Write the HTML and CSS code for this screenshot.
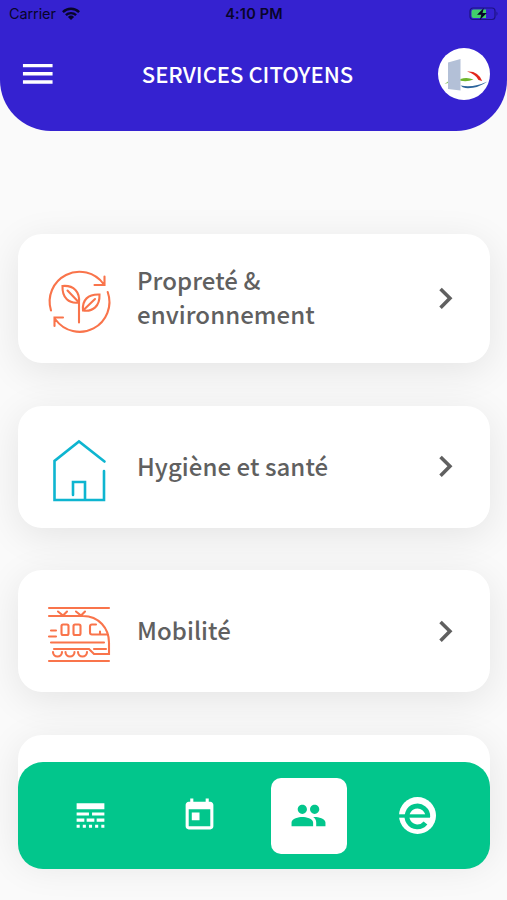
FILE: index.html
```html
<!DOCTYPE html>
<html lang="fr">
<head>
<meta charset="utf-8">
<title>Services citoyens</title>
<link rel="stylesheet" href="styles.css">
</head>
<body>
<div class="screen">
  <header class="header">
    <div class="status">
      <div class="carrier"><span>Carrier</span>
        <svg class="wifi" viewBox="0 0 18 13"><g fill="none" stroke="#08052a" stroke-width="2.4"><path d="M.9 5.1a11.5 11.5 0 0 1 16.2 0"/><path d="M3.9 8.2a7.2 7.2 0 0 1 10.2 0"/></g><path d="M9 13 5.9 9.9a4.4 4.4 0 0 1 6.2 0z" fill="#08052a"/></svg>
      </div>
      <div class="time">4:10 PM</div>
      <svg class="battery" viewBox="0 0 30 14"><rect x="1" y="1" width="25" height="11.5" rx="3" fill="none" stroke="#1d1382" stroke-width="1.2"/><path d="M4.5 2.5H17v8.6H4.500a2 2 0 0 1-2-2V4.500a2 2 0 0 1 2-2z" fill="#41d16b"/><path d="M27.500 4.600q2 2.200 0 4.400z" fill="#1d1382"/><path d="M14.800 1 8 7.700h4.300L10.800 13 17.800 6h-4.300z" fill="#08052a"/></svg>
    </div>
    <div class="titlebar">
      <svg class="menu" viewBox="0 0 24 24"><path d="M3 18h18v-2H3v2zm0-5h18v-2H3v2zm0-7v2h18V6H3z" fill="#fff"/></svg>
      <h1>SERVICES CITOYENS</h1>
      <svg class="avatar" viewBox="0 0 52 52"><circle cx="26" cy="26" r="26" fill="#fff"/><path d="M10 14.500 22.500 11v31.500L10 41z" fill="#b3c0d7"/><path d="M6.500 36 10 33.500v1.600z" fill="#8cc36a"/><path d="M22.500 31q6.500-2.200 13 .6-6 2.500-13 1.200z" fill="#6fb52c"/><path d="M29 23.500q11-1 15.200 9.500l-3.700-1q-3-6-11.500-8.500z" fill="#e2261c"/><path d="M22.500 37.500q13 2.500 27-4-10.500 7.500-22 6.600-3-.6-5-2.600z" fill="#2d649b"/></svg>
    </div>
  </header>

  <main class="list">
    <a class="card tall">
      <svg class="icon orange" viewBox="0 0 64 64"><path d="M4 44.500A29.800 29.800 0 0 1 56.500 18M57.500 10.500V19H47.500M60.700 26A29.800 29.800 0 0 1 8.500 53.500M7.500 60V51.500H16M32 56.500V35M32 36.500C22 38 15 32 15.500 20 27 19 33 26 32 36.500zM20.500 24.500 32 36.500M36 44.500C35 34 41 28 52.500 28.500 53 40 46 46 36 44.500zM36 44.500 48 33"/></svg>
      <span class="label">Propreté &amp;<br>environnement</span>
      <svg class="chevron" viewBox="0 0 24 24"><path d="M10 6 8.590 7.410 13.170 12l-4.580 4.590L10 18l6-6z"/></svg>
    </a>
    <a class="card">
      <svg class="icon cyan" viewBox="0 0 64 64"><path d="M57.500 26.500 32 6.500 7.500 26V65H57V36M26 60V47H38V64.500"/></svg>
      <span class="label">Hygiène et santé</span>
      <svg class="chevron" viewBox="0 0 24 24"><path d="M10 6 8.590 7.410 13.170 12l-4.580 4.590L10 18l6-6z"/></svg>
    </a>
    <a class="card">
      <svg class="icon orange" viewBox="0 -4.500 64 64"><path d="M2 4.500H62M2 12.500H36C52 12.500 62 25 62 39V50.500H47L42 45.500H7M11 8l5 4 4-4M29 8l5 4 4-4M49 21H45q-2 0-2 2v6q0 2 2 2H61M53 28v3M4 39H57M4 27h5M2 33h7M47 45.500H59M2 57.500H62"/><rect x="14.500" y="21" width="7" height="10.500" rx="1.500"/><rect x="26.500" y="21" width="7" height="10.500" rx="1.500"/><path d="M6 48.500a4.500 4.500 0 0 0 9 0M18.500 48.500a4.500 4.500 0 0 0 9 0M31 48.500a4.500 4.500 0 0 0 9 0"/></svg>
      <span class="label">Mobilité</span>
      <svg class="chevron" viewBox="0 0 24 24"><path d="M10 6 8.590 7.410 13.170 12l-4.580 4.590L10 18l6-6z"/></svg>
    </a>
    <a class="card"></a>
  </main>

  <nav class="tabs">
    <a class="tab"><svg viewBox="0 0 24 24"><path d="M3 16h5v-2H3v2zm6.500 0h5v-2h-5v2zm6.500 0h5v-2h-5v2zM3 20h2v-2H3v2zm4 0h2v-2H7v2zm4 0h2v-2h-2v2zm4 0h2v-2h-2v2zm4 0h2v-2h-2v2zM3 12h8v-2H3v2zm10 0h8v-2h-8v2zM3 4v4h18V4H3z"/></svg></a>
    <a class="tab"><svg viewBox="0 0 24 24"><path d="M19 3h-1V1h-2v2H8V1H6v2H5c-1.110 0-1.990.9-1.990 2L3 19c0 1.100.890 2 2 2h14c1.100 0 2-.9 2-2V5c0-1.100-.9-2-2-2zm0 16H5V8h14v11zM7 10h5v5H7z"/></svg></a>
    <a class="tab active"><svg viewBox="0 0 24 24"><path d="M16 11c1.660 0 2.990-1.340 2.990-3S17.660 5 16 5s-3 1.340-3 3 1.340 3 3 3zm-8 0c1.660 0 2.990-1.340 2.990-3S9.660 5 8 5 5 6.340 5 8s1.340 3 3 3zm0 2c-2.330 0-7 1.170-7 3.500V19h14v-2.500c0-2.330-4.670-3.500-7-3.500zm8 0c-.290 0-.620.020-.970.050 1.160.840 1.970 1.970 1.970 3.450V19h6v-2.500c0-2.330-4.670-3.500-7-3.500z"/></svg></a>
    <a class="tab"><svg viewBox="0 0 37 37"><circle cx="18.500" cy="18.500" r="18.500"/><g fill="none" stroke="#02c68c"><path d="M28.800 20A10.400 10.400 0 1 0 26.500 26" stroke-width="4.800"/><path d="M0 19H31" stroke-width="3.400"/></g></svg></a>
  </nav>
</div>
</body>
</html>
```
FILE: styles.css
```css
* { box-sizing: border-box; }
body { margin: 0; }
svg { display: block; flex: none; }

.screen {
  position: relative;
  width: 507px;
  height: 900px;
  overflow: hidden;
  background: #fafafa;
  font-family: "Noto Sans CJK SC", sans-serif;
}

.header {
  height: 131px;
  background: #3522d0;
  border-radius: 0 0 51px 51px;
}
.status {
  display: grid;
  grid-template-columns: 1fr auto 1fr;
  align-items: center;
  height: 27px;
  padding: 0 8px 0 9px;
  font: 14.5px/27px Inter, sans-serif;
  color: #08052a;
}
.carrier { display: flex; align-items: center; gap: 6px; }
.carrier span { letter-spacing: -.1px; }
.wifi { width: 18px; height: 13px; }
.time { font-weight: 600; letter-spacing: .15px; }
.battery { width: 30px; height: 14px; justify-self: end; }

.titlebar {
  display: grid;
  grid-template-columns: 39.5px 1fr 52px;
  align-items: center;
  height: 93px;
  padding: 0 17px 0 17.5px;
}
.menu { width: 39.5px; height: 39.5px; }
h1 {
  margin: -2px 0 0;
  text-align: center;
  font-size: 22px;
  font-weight: 500;
  line-height: 32px;
  color: #fff;
  white-space: nowrap;
}
.avatar { width: 52px; height: 52px; }

.list {
  display: flex;
  flex-direction: column;
  gap: 42.8px;
  padding: 102.8px 17px 0 18px;
}
.card {
  display: flex;
  align-items: center;
  flex: none;
  height: 122px;
  padding: 0 23px 0 29px;
  border-radius: 24px;
  background: #fff;
  box-shadow: 0 8px 38px rgba(0, 0, 0, .09);
}
.card.tall { height: 129px; }
.icon {
  width: 64px;
  height: 64px;
  margin-right: 26px;
  overflow: visible;
  fill: none;
  stroke-width: 2.1;
  stroke-linecap: round;
}
.orange { stroke: #f9744b; }
.cyan { stroke: #0eb5d0; stroke-width: 2.6; }
.label {
  flex: 1;
  margin-top: -2px;
  font-size: 24px;
  font-weight: 500;
  letter-spacing: .05px;
  line-height: 34px;
  color: #606060;
  white-space: nowrap;
}
.chevron { width: 42.7px; height: 42.7px; fill: #606060; }

.tabs {
  position: absolute;
  left: 18px;
  right: 17px;
  top: 762px;
  height: 107px;
  display: flex;
  align-items: center;
  justify-content: space-between;
  padding: 0 34px;
  border-radius: 25px;
  background: #02c68c;
}
.tab {
  display: flex;
  align-items: center;
  justify-content: center;
  width: 76px;
  height: 76px;
  border-radius: 10px;
  fill: #fff;
}
.tab svg { width: 37px; height: 37px; }
.active { background: #fff; fill: #02c68c; }
```
